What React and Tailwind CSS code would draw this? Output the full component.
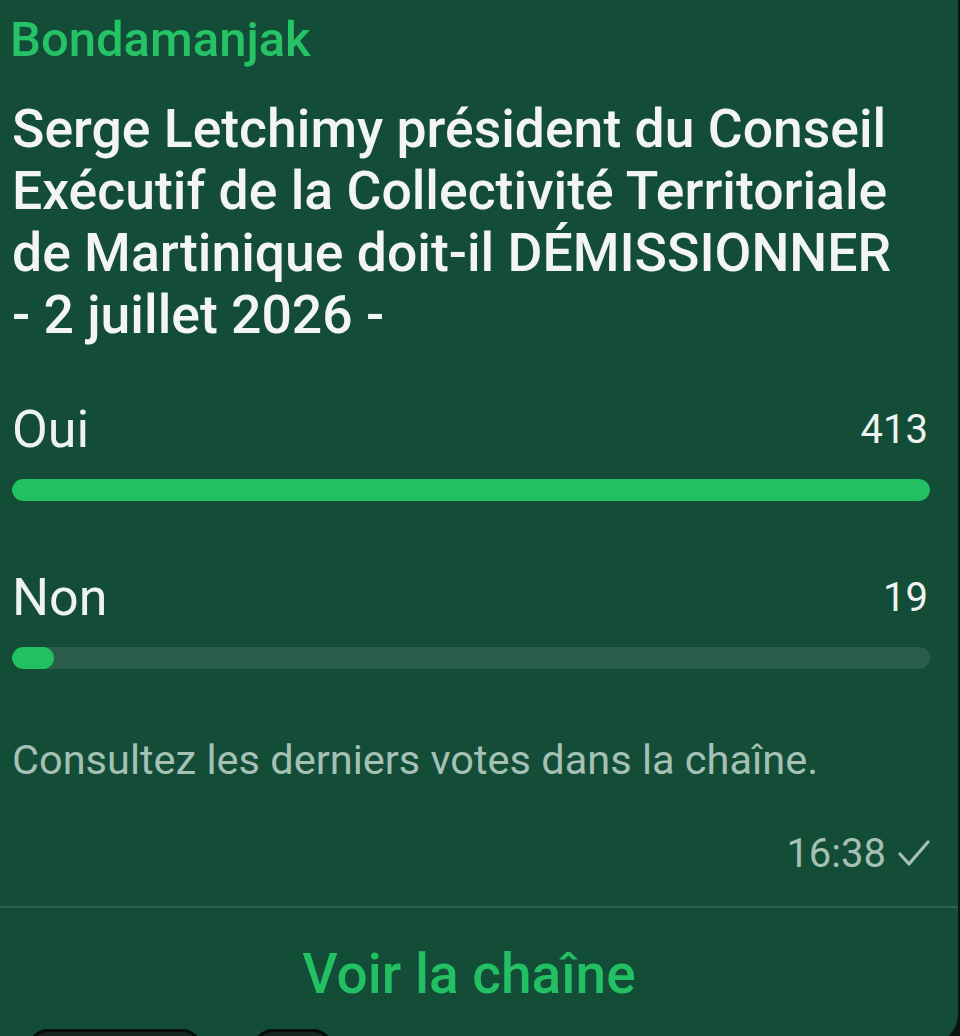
import React from 'react';

const font = { fontFamily: 'Roboto, "Noto Sans", sans-serif' };

// poll options with their vote counts
const options = [
    { label: 'Oui', votes: 413 },
    { label: 'Non', votes: 19 },
];

const PollOption = ({ label, votes, max, first }) => {
    // width of the filled part of the bar, relative to the leading option
    const pct = Math.max((votes / max) * 100, 4);
    return (
        <div className={first ? 'mt-[54px]' : 'mt-[67px]'}>
            <div className="flex items-center justify-between pr-[30px]">
                <span className="text-[52px] leading-[60px] text-[#eef3f0]">{label}</span>
                <span className="text-[40px] leading-[48px] text-[#eef3f0]">{votes}</span>
            </div>
            <div className="mt-[19px] mr-[28px] h-[22px] rounded-full bg-[#2b5d4b] overflow-hidden">
                <div className="h-full rounded-full bg-[#21c063]" style={{ width: `${pct}%` }} />
            </div>
        </div>
    );
};

export default function App() {
    const max = Math.max(...options.map(o => o.votes));

    return (
        <div className="relative h-[1036px] w-[960px] overflow-hidden bg-[#0c1411]" style={font}>
            <div className="w-[958px] h-[1044px] bg-[#134d38] rounded-br-[30px]">
                <div className="pl-[12px] pt-[12px]">
                    <div className="text-[49px] leading-[56px] font-medium text-[#25c366] -ml-[2px]">Bondamanjak</div>

                    <h1 className="mt-[30px] text-[53.5px] leading-[62px] font-medium text-[#f2f5f3] pr-[56px]">
                        Serge Letchimy président du Conseil Exécutif de la Collectivité Territoriale de Martinique doit-il DÉMISSIONNER - 2 juillet 2026 -
                    </h1>

                    {options.map((o, i) => (
                        <PollOption key={o.label} {...o} max={max} first={i === 0} />
                    ))}

                    <p className="mt-[67px] text-[41.5px] leading-[48px] text-[#a5c0b4]">
                        Consultez les derniers votes dans la chaîne.
                    </p>

                    <div className="mt-[46px] flex items-center justify-end gap-[12px] pr-[28px] text-[40px] leading-[48px] text-[#a5c0b4]">
                        <span>16:38</span>
                        <svg width="32" height="30" viewBox="0 0 32 30" fill="none" stroke="#a5c0b4" strokeWidth="3.2" strokeLinecap="round" strokeLinejoin="round">
                            <path d="M2 15 L11 25 L30 3" />
                        </svg>
                    </div>
                </div>

                <div className="mt-[28px] h-[2px] bg-[#2c6150]" />

                <div className="mt-[36px] text-center text-[55px] leading-[60px] font-medium text-[#22c063] pr-[20px]">
                    Voir la chaîne
                </div>
            </div>

            {/* reaction chips peeking under the bubble */}
            <div className="absolute left-[28px] top-[1029px] w-[174px] h-[40px] rounded-full bg-[#12261f] border-[3px] border-[#070b09]" />
            <div className="absolute left-[253px] top-[1029px] w-[80px] h-[40px] rounded-full bg-[#12261f] border-[3px] border-[#070b09]" />
        </div>
    );
}
